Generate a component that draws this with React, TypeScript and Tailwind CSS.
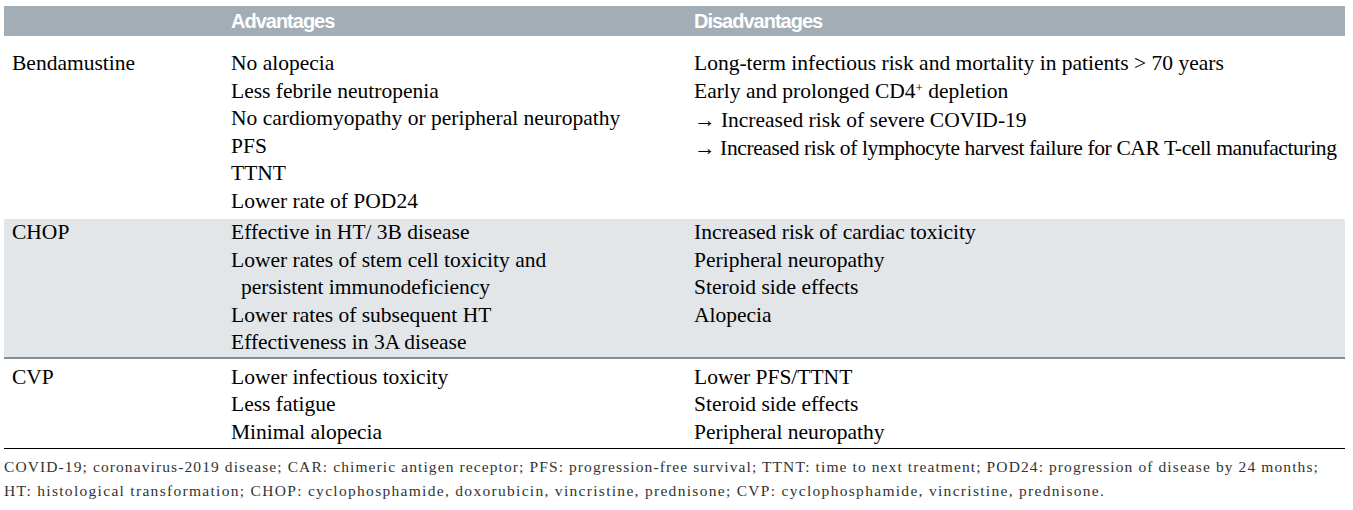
const rows = [
  {
    name: "Bendamustine",
    shaded: false,
    pad: "pt-[14px] pb-[4px]",
    adv: [
      "No alopecia",
      "Less febrile neutropenia",
      "No cardiomyopathy or peripheral neuropathy",
      "PFS",
      "TTNT",
      "Lower rate of POD24",
    ],
    dis: [
      "Long-term infectious risk and mortality in patients > 70 years",
      "CD4",
      "→ Increased risk of severe COVID-19",
      "→ Increased risk of lymphocyte harvest failure for CAR T-cell manufacturing",
    ],
  },
  {
    name: "CHOP",
    shaded: true,
    pad: "pt-0 pb-0",
    adv: [
      "Effective in HT/ 3B disease",
      "Lower rates of stem cell toxicity and",
      "  persistent immunodeficiency",
      "Lower rates of subsequent HT",
      "Effectiveness in 3A disease",
    ],
    dis: [
      "Increased risk of cardiac toxicity",
      "Peripheral neuropathy",
      "Steroid side effects",
      "Alopecia",
    ],
  },
  {
    name: "CVP",
    shaded: false,
    pad: "pt-[5px] pb-[2px]",
    adv: ["Lower infectious toxicity", "Less fatigue", "Minimal alopecia"],
    dis: ["Lower PFS/TTNT", "Steroid side effects", "Peripheral neuropathy"],
  },
];

function Line({ text }: { text: string }) {
  if (text === "CD4") {
    return (
      <div>
        Early and prolonged CD4<span className="relative -top-[6px] text-[13px]">+</span> depletion
      </div>
    );
  }
  if (text.startsWith("  ")) {
    return <div className="pl-[10px]">{text.trim()}</div>;
  }
  if (text.length > 70) {
    // longest line, squeezed a little so it stays inside the table
    return <div className="whitespace-nowrap tracking-[-0.38px]">{text}</div>;
  }
  return <div className="whitespace-nowrap">{text}</div>;
}

export default function App() {
  return (
    <main className="min-h-screen bg-white pt-[6px]">
      <div className="ml-[4px] w-[1341px] text-black font-['Liberation_Serif',serif] text-[21.5px] leading-[27.5px]">
        <div className="grid grid-cols-[227px_463px_1fr] h-[30px] items-center bg-[#a3adb5] text-white font-['Liberation_Sans',sans-serif] font-bold text-[20px] tracking-[-1px] leading-none">
          <div />
          <div>Advantages</div>
          <div>Disadvantages</div>
        </div>

        {rows.map((r) => (
          <div
            key={r.name}
            className={`grid grid-cols-[227px_463px_1fr] ${r.pad} ${
              r.shaded ? "bg-[#e2e6e9] border-b-2 border-[#7f8f99]" : ""
            }`}
          >
            <div className="pl-[8px]">{r.name}</div>
            <div>
              {r.adv.map((t) => (
                <Line key={t} text={t} />
              ))}
            </div>
            <div>
              {r.dis.map((t) => (
                <Line key={t} text={t} />
              ))}
            </div>
          </div>
        ))}

        <div className="border-t border-black pt-[6px] text-[15.5px] leading-[24px] text-[#333]">
          <p className="whitespace-nowrap tracking-[1.1px]">
            COVID-19; coronavirus-2019 disease; CAR: chimeric antigen receptor; PFS: progression-free survival; TTNT: time to next treatment; POD24: progression of disease by 24 months;
          </p>
          <p className="whitespace-nowrap tracking-[1.3px]">
            HT: histological transformation; CHOP: cyclophosphamide, doxorubicin, vincristine, prednisone; CVP: cyclophosphamide, vincristine, prednisone.
          </p>
        </div>
      </div>
    </main>
  );
}
